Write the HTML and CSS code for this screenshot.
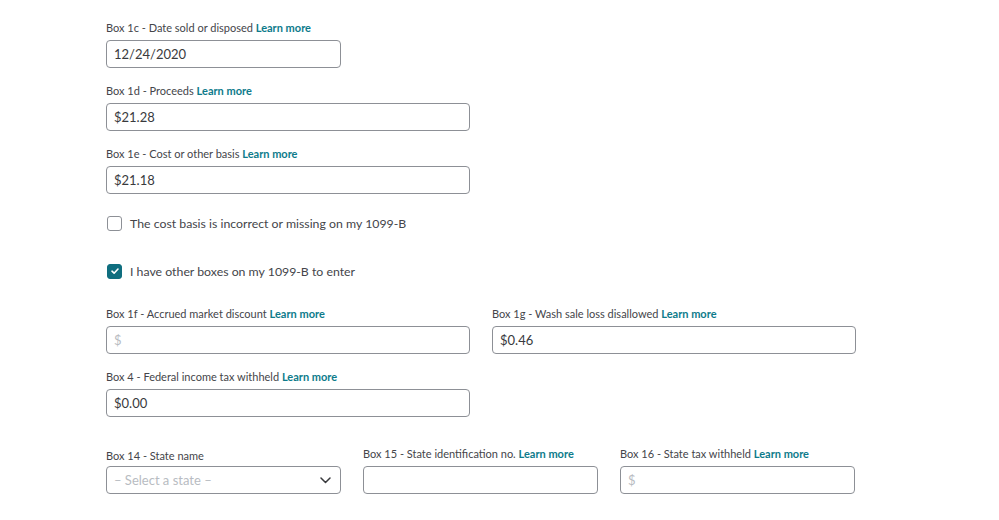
FILE: index.html
```html
<!DOCTYPE html>
<html>
<head>
<meta charset="utf-8">
<link rel="stylesheet" href="styles.css">
</head>
<body>
<div class="form">
  <div class="field narrow">
    <div class="label">Box 1c - Date sold or disposed <a class="learn">Learn more</a></div>
    <div class="input">12/24/2020</div>
  </div>
  <div class="field medium">
    <div class="label">Box 1d - Proceeds <a class="learn">Learn more</a></div>
    <div class="input">$21.28</div>
  </div>
  <div class="field medium">
    <div class="label">Box 1e - Cost or other basis <a class="learn">Learn more</a></div>
    <div class="input">$21.18</div>
  </div>

  <div class="check first">
    <span class="box"></span>
    <span class="check-text">The cost basis is incorrect or missing on my 1099-B</span>
  </div>
  <div class="check second">
    <span class="box checked">
      <svg width="10" height="10" viewBox="0 0 10 10"><path d="M2 5.2 L4.1 7.2 L8 3" fill="none" stroke="#fff" stroke-width="1.6" stroke-linecap="round" stroke-linejoin="round"/></svg>
    </span>
    <span class="check-text">I have other boxes on my 1099-B to enter</span>
  </div>

  <div class="row two after-check">
    <div class="field">
      <div class="label">Box 1f - Accrued market discount <a class="learn">Learn more</a></div>
      <div class="input placeholder">$</div>
    </div>
    <div class="field">
      <div class="label">Box 1g - Wash sale loss disallowed <a class="learn">Learn more</a></div>
      <div class="input">$0.46</div>
    </div>
  </div>
  <div class="row two">
    <div class="field">
      <div class="label">Box 4 - Federal income tax withheld <a class="learn">Learn more</a></div>
      <div class="input">$0.00</div>
    </div>
  </div>
  <div class="row three last">
    <div class="field">
      <div class="label low">Box 14 - State name</div>
      <div class="input select placeholder">
        <span>– Select a state –</span>
        <svg class="chev" width="11" height="7" viewBox="0 0 11 7"><path d="M1 1 L5.5 5.5 L10 1" fill="none" stroke="#393a3d" stroke-width="1.5" stroke-linecap="round" stroke-linejoin="round"/></svg>
      </div>
    </div>
    <div class="field">
      <div class="label">Box 15 - State identification no. <a class="learn">Learn more</a></div>
      <div class="input"></div>
    </div>
    <div class="field">
      <div class="label">Box 16 - State tax withheld <a class="learn">Learn more</a></div>
      <div class="input placeholder">$</div>
    </div>
  </div>
</div>
</body>
</html>
```

FILE: styles.css
```css
html, body {
  margin: 0;
  padding: 0;
  background: #ffffff;
}
body {
  font-family: Lato, "Liberation Sans", sans-serif;
  color: #393a3d;
}
.form {
  width: 750px;
  padding: 20px 0 0 106px;
  display: flex;
  flex-direction: column;
}
.field {
  display: flex;
  flex-direction: column;
  margin-bottom: 15px;
}
.field.narrow { width: 235px; }
.field.medium { width: 364px; }
.label {
  font-size: 11px;
  line-height: 16px;
  height: 16px;
  margin-bottom: 4px;
  color: #44454a;
  white-space: nowrap;
}
.label.low { padding-top: 2px; height: 14px; }
.learn {
  color: #0d7b8b;
  font-weight: 700;
}
.input {
  box-sizing: border-box;
  height: 28px;
  border: 1px solid #8d9096;
  border-radius: 4px;
  padding: 0 7px;
  font-size: 13px;
  line-height: 26px;
  color: #393a3d;
  font-weight: 400;
  display: flex;
  align-items: center;
}
.input.placeholder { color: #b8bcc2; }
.input.select { justify-content: space-between; padding-right: 9px; }
.chev { flex: none; }
.check {
  display: flex;
  align-items: center;
  height: 20px;
  margin-left: 1px;
}
.check.first { margin-top: 4px; }
.check.second { margin-top: 28px; }
.box {
  box-sizing: border-box;
  width: 15px;
  height: 15px;
  border: 1px solid #8d9096;
  border-radius: 3px;
  margin-right: 8px;
  display: flex;
  align-items: center;
  justify-content: center;
}
.box.checked {
  background: #0f6e7f;
  border-color: #0f6e7f;
}
.check-text {
  font-size: 12.3px;
  color: #44454a;
}
.row {
  display: grid;
  column-gap: 22px;
}
.row.two { grid-template-columns: 364px 364px; }
.row.three { grid-template-columns: 235px 235px 235px; }
.row.after-check { margin-top: 25px; }
.row.last { margin-top: 14px; }
```
